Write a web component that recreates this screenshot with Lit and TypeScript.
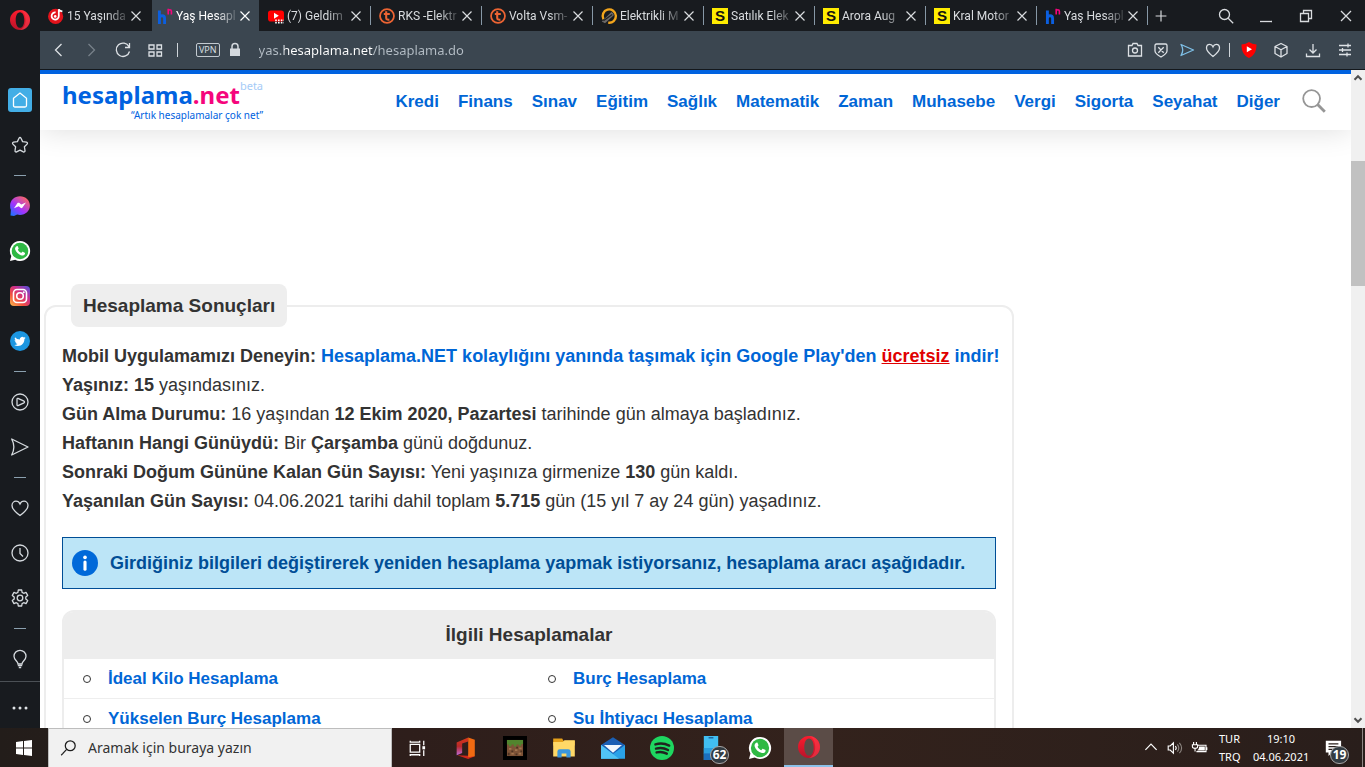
import { LitElement, html, svg, css, TemplateResult, SVGTemplateResult } from "lit";
import { customElement } from "lit/decorators.js";
import { classMap } from "lit/directives/class-map.js";

type Art = SVGTemplateResult;

const whatsapp = svg`<path fill="#fff" d="M10 0a10 10 0 0 0-8.700 15L0 20l5.200-1.300A10 10 0 1 0 10 0z"/><circle cx="10" cy="10" r="8.300" fill="#2fb944"/><path fill="#fff" d="M6.700 5.200c.4-.2.9-.2 1.100.2l.8 1.800c.1.300 0 .6-.2.800l-.6.800c.8 1.500 1.900 2.500 3.400 3.200l.9-1c.2-.3.500-.3.800-.2l1.800.9c.5.300.4.800.2 1.400-.5 1.200-1.900 1.700-3.100 1.400-3.500-.9-5.900-3.300-6.700-6.200-.3-1.300.5-2.600 1.600-3.100z"/>`;
const operaO = svg`<defs><linearGradient id="op" x1="0" y1="0" x2="0" y2="1"><stop offset="0" stop-color="#ff1b2d"/><stop offset="1" stop-color="#b8142a"/></linearGradient></defs><path fill="url(#op)" fill-rule="evenodd" d="M10 0c5.500 0 10 4.500 10 10s-4.500 10-10 10S0 15.500 0 10 4.500 0 10 0zm0 2.200C7.200 2.200 5.700 5.800 5.700 10s1.500 7.800 4.300 7.800 4.300-3.600 4.300-7.800S12.800 2.200 10 2.200z"/><path fill="#fa3c4c" opacity=".6" d="M10 0c6 0 10 5 10 10s-4 10-10 10c4-1.500 5.600-6 5.600-10S14 1.500 10 0z"/>`;

const art: Record<string, Art> = {
  opera: operaO,
  home: svg`<path class="ln" d="M3.500 8.300 10 3l6.500 5.300v7.200q0 1.500-1.500 1.500H5q-1.500 0-1.500-1.500z"/>`,
  star: svg`<path class="ln" stroke-linejoin="round" d="M10 2.500c.5 0 .8.300 1 .7l1.600 3.400 3.900.6c1 .2 1.300 1.200.6 1.900l-2.700 2.700.6 3.900c.1 1-.8 1.600-1.600 1.200L10 15.100l-3.400 1.800c-.9.400-1.800-.3-1.600-1.200l.6-3.900L2.900 9.100c-.7-.7-.4-1.700.6-1.900l3.900-.6L9 3.200c.2-.4.500-.7 1-.7z"/>`,
  messenger: svg`<defs><linearGradient id="ms" x1="0" y1="1" x2=".8" y2="0"><stop offset="0" stop-color="#0a7cff"/><stop offset=".45" stop-color="#a033ff"/><stop offset="1" stop-color="#ff6a5c"/></linearGradient></defs><path fill="url(#ms)" d="M10 .2c5.600 0 9.900 4 9.900 9.400S15.600 19 10 19c-1 0-2-.1-2.900-.4L4 20l-3.500-.5L.9 14A9.600 9.600 0 0 1 .1 9.600C.1 4.200 4.400.2 10 .2z"/><path fill="#fff" d="m4 12.200 3.500-5.100c.4-.5 1.100-.6 1.600-.3l2.200 1.700 4.700-2-3.500 5.100c-.4.600-1.100.7-1.600.4L8.700 10.300z"/>`,
  whatsapp,
  instagram: svg`<defs><linearGradient id="ig" x1="0" y1="1" x2=".9" y2="0"><stop offset="0" stop-color="#fdc04e"/><stop offset=".35" stop-color="#f2503f"/><stop offset=".65" stop-color="#cc2f8c"/><stop offset="1" stop-color="#5b4fd8"/></linearGradient></defs><rect width="20" height="20" rx="4" fill="url(#ig)"/><rect x="3.500" y="3.500" width="13" height="13" rx="3.500" fill="none" stroke="#fff" stroke-width="1.600"/><circle cx="10" cy="10" r="3.300" fill="none" stroke="#fff" stroke-width="1.600"/><circle cx="13.800" cy="6.200" r="1" fill="#fff"/>`,
  twitter: svg`<circle cx="10" cy="10" r="10" fill="#1c96e0"/><path fill="#fff" d="M15.600 6.800c-.4.200-.8.300-1.300.4.500-.3.800-.7 1-1.200-.5.200-1 .4-1.500.5a2.400 2.400 0 0 0-4 2.100A6.600 6.600 0 0 1 5 6.200a2.400 2.400 0 0 0 .7 3.100c-.4 0-.7-.1-1.100-.3 0 1.200.8 2.100 1.900 2.300-.4.100-.7.100-1.100 0 .3 1 1.200 1.600 2.200 1.600A4.700 4.700 0 0 1 4.200 14c1.100.6 2.300 1 3.600 1 4.300 0 6.800-3.600 6.600-7 .5-.3.900-.7 1.200-1.200z"/>`,
  player: svg`<circle class="ln" cx="10" cy="10" r="8"/><path class="ln" stroke-linejoin="round" d="M7 7.200q0-1.200 1-.8l6 2.800q1 .8 0 1.600l-6 2.800q-1 .4-1-.8z"/>`,
  send: svg`<path class="ln" stroke-linejoin="round" d="m1.700 2 16.300 8-16.300 8Q6 10 1.700 2z"/>`,
  heart: svg`<path class="ln" d="M10 17.500C4.500 13.500 2 10.700 2 7.500 2 5 4 3.200 6 3.200c1.800 0 3.200 1 4 2.800.8-1.800 2.200-2.800 4-2.800 2 0 4 1.800 4 4.300 0 3.200-2.500 6-8 10z"/>`,
  smallheart: svg`<path class="ln" d="M10 16.500C5.500 13 3.500 10.700 3.500 8c0-2.200 1.500-3.700 3.200-3.700 1.600 0 2.700 1 3.300 2.500.6-1.500 1.700-2.500 3.300-2.500 1.700 0 3.200 1.500 3.200 3.700 0 2.700-2 5-6.500 8.500z"/>`,
  clock: svg`<circle class="ln" cx="10" cy="10" r="8"/><path class="ln" d="M10 5v5.500l3 3"/>`,
  gear: svg`<path class="ln" stroke-linejoin="round" d="m8.300 2 3.400 0 .4 2.400 1.600.9 2.300-.9 1.700 3-1.900 1.500v2.200l1.900 1.500-1.700 3-2.300-.9-1.600.9-.4 2.400H8.300l-.4-2.400-1.600-.9-2.300.9-1.700-3 1.900-1.500V8.900L2.300 7.400l1.700-3 2.300.9 1.600-.9z"/><circle class="ln" cx="10" cy="10" r="2.800"/>`,
  bulb: svg`<path class="ln" d="M8 15c0-3-4-3.800-4-7.700a6 6 0 0 1 12 0C16 11.200 12 12 12 15z"/><path class="ln" d="M7.800 16.500h4.400M8.800 18.500h2.400"/>`,
  dots: svg`<g fill="#dfe3e6"><circle cx="4" cy="10" r="1.500"/><circle cx="10" cy="10" r="1.500"/><circle cx="16" cy="10" r="1.500"/></g>`,
  close: svg`<path class="ln" d="m5 5 10 10M15 5 5 15"/>`,
  plus: svg`<path class="ln" d="M10 4v12M4 10h12"/>`,
  search: svg`<circle class="ln" cx="8.500" cy="8.500" r="5"/><path class="ln" d="m12.200 12.200 5 5"/>`,
  minimize: svg`<path class="ln" d="M4 15.500h12"/>`,
  restore: svg`<path class="ln" d="M4.500 7.500h8v8h-8zM7.500 7.500v-3h8v8h-3"/>`,
  back: svg`<path class="ln" d="m12.500 4-6 6 6 6"/>`,
  forward: svg`<path class="ln" d="m7.500 4 6 6-6 6"/>`,
  reload: svg`<path class="ln" stroke-width="1.500" d="M16 6.700A6.700 6.700 0 1 0 16.500 11.500M16.500 3v4.500H12"/>`,
  grid: svg`<path class="ln" d="M4 5h5v4H4zM12 5h4.500v4H12zM4 12h5v4H4zM12 12h4.500v4H12z"/>`,
  lock: svg`<path fill="#d4d9de" d="M5 8.500h10V16H5z"/><path fill="none" stroke="#d4d9de" stroke-width="1.500" d="M7 9V6.500a3 3 0 0 1 6 0V9"/>`,
  camera: svg`<path class="ln" d="M3.500 5.500H7l1-2h4l1 2h3.500v10.500h-13z"/><circle class="ln" cx="10" cy="10.500" r="2.500"/>`,
  shield: svg`<path class="ln" d="M5.500 4h9q1.500 0 1.500 1.500V11c0 2.500-2.500 4-6 6-3.500-2-6-3.500-6-6V5.500Q4 4 5.500 4zM7.300 7.300l5.400 5.400M12.700 7.300l-5.400 5.400"/>`,
  flow: svg`<path fill="none" stroke="#7fc1e8" stroke-width="1.300" stroke-linejoin="round" d="m4 4.500 12.500 5.500L4 15.500Q7.500 10 4 4.500z"/>`,
  ytshield: svg`<path fill="#f00" d="M2.500 4.500Q7 4 10 2q3 2 7.500 2.500C17.500 11 15.500 15.500 10 18 4.500 15.500 2.500 11 2.500 4.500z"/><path fill="#fff" d="m7.800 6.200 5.200 3-5.200 3z"/>`,
  cube: svg`<path class="ln" stroke-linejoin="round" d="m10 3.500 6 3v7l-6 3.500-6-3.500v-7zM4 6.500l6 3.200 6-3.200M10 9.700V17"/>`,
  download: svg`<path class="ln" d="M10 4v8.500M6.500 9.500l3.500 3.500 3.500-3.500M3.500 13.500v3h13v-3"/>`,
  tune: svg`<path class="ln" d="M4 5.500h12M4 10h12M4 14.500h12M13 3.500v4M7.500 8v4M12 12.500v4"/>`,
  magnifier: svg`<circle cx="8" cy="8" r="7" fill="none" stroke="#969696" stroke-width="1.500"/><path stroke="#969696" stroke-width="2.400" d="m13 13 6 6"/>`,
  info: svg`<circle cx="10" cy="10" r="10" fill="#0069d9"/><circle cx="10" cy="5.700" r="1.400" fill="#fff"/><path stroke="#fff" stroke-width="2.400" stroke-linecap="round" d="M10 9.300v5.500"/>`,
  up: svg`<path fill="none" stroke="#505050" stroke-width="3" d="m5 12.500 5-5 5 5"/>`,
  down: svg`<path fill="none" stroke="#505050" stroke-width="3" d="m5 7.500 5 5 5-5"/>`,
  music: svg`<circle cx="9.500" cy="10.500" r="9.500" fill="#e3131b"/><path fill="none" stroke="#fff" stroke-width="2.200" d="M9.500 5.500a4.500 4.500 0 1 0 4 4.500V1.500c.6 1.800 2 2.500 4.500 2.800"/><circle cx="9" cy="10.500" r="1.600" fill="#fff"/>`,
  hn: svg`<path fill="none" stroke="#0b5fe0" stroke-width="3.600" d="M3 3v17M3 13c0-4.500 6.500-4.500 6.500 0v7"/><path fill="none" stroke="#f5057c" stroke-width="2" d="M14 1v7M14 4c0-2.500 4-2.500 4 0v4"/>`,
  youtube: svg`<rect y="3" width="20" height="14" rx="3.500" fill="#f00"/><path fill="#fff" d="m7.500 6 6 3.700-6 3.800z"/><path stroke="#fff" stroke-width="2" stroke-dasharray="2 1.500" d="M9 15.500h11M9 18.500h11"/>`,
  tlogo: svg`<circle cx="10" cy="10" r="8.700" fill="none" stroke="#ec6433" stroke-width="2.200"/><path fill="none" stroke="#ec6433" stroke-width="2.600" d="M9 4v8.500q0 2.500 4 2M6 7.500h7.500"/>`,
  swirl: svg`<path fill="none" stroke="#f3a51c" stroke-width="3" d="M3 14A8.300 8.300 0 1 1 9 18.300"/><path fill="#6d6a68" d="M1 17 13 5q3 1 3 4L5 19z"/><path stroke="#222" stroke-width="1.500" d="M3 16 14 8"/>`,
  sahibinden: svg`<rect width="20" height="20" fill="#ffec00"/><text class="glyph" x="10" y="16.500" text-anchor="middle">S</text>`,
  windows: svg`<path fill="#fff" d="m2 4 7-1v6.500H2zM10 2.900 18 2v7.500h-8zM2 10.500h7V17l-7-1zM10 10.500h8V18l-8-1z"/>`,
  wsearch: svg`<circle cx="12.500" cy="7.500" r="5.500" fill="none" stroke="#1d1d1d" stroke-width="1.400"/><path stroke="#1d1d1d" stroke-width="1.400" d="m8.500 11.500-6 6.500"/>`,
  taskview: svg`<path fill="none" stroke="#fff" stroke-width="1.400" d="M2.500 6h10.500v8.500H2.500zM2.500 2v1.500H13V2M2.500 19v-1.500H13V19M17.500 2v5M17.500 12.500V19"/><path fill="#fff" d="M16 8h3v3.500h-3z"/>`,
  office: svg`<defs><linearGradient id="of" x1="0" y1="1" x2="0" y2="0"><stop offset="0" stop-color="#c06ad8"/><stop offset=".5" stop-color="#b8292a"/><stop offset="1" stop-color="#d8381a"/></linearGradient></defs><path fill="url(#of)" d="M1.500 5 12 .5V4L6.500 6v8.500l-5 2z"/><path fill="#d0271b" d="m2 16.500 10 .5v-1.500l6 2-6 2.500z"/><path fill="#f06a12" d="m12 .5 6 2v15l-6 .8z"/>`,
  minecraft: svg`<rect width="20" height="20" fill="#000"/><path fill="#7d5337" d="M3.300 3.300h13.400v13.400H3.300z"/><path fill="#51852e" d="M3.300 3.300h13.400v3.400h-1.500v1.500h-2V7h-2v1.800H9V7H7v1.500H5V7H3.300z"/><path fill="#a2754f" d="M5 10h2v1.500H5zM10 11h2v1.500h-2zM13.500 9.500h2V11h-2zM7 14h2v1.500H7zM13 14h2v1.500h-2z"/><path fill="#4e3322" d="M7 12h1.500v1.500H7zM11 9h1.500v1.500H11zM4 14h1.500v2H4zM14.500 12H16v1.500h-1.500zM10.500 14.500H12V16h-1.500z"/>`,
  folder: svg`<path fill="#e5a01a" d="M1 2h7.500l1 2H19v4H1z"/><path fill="#ffd867" d="M1 5h8l1.500-1.500H19V17H1z"/><path fill="#3a96dd" d="M4.500 18v-5q0-2 2-2h7q2 0 2 2v5H12v-3.500H8V18z"/>`,
  mail: svg`<path fill="#1b5fb4" d="M0 7.500 10 1l10 6.500V18H0z"/><path fill="#f2f8fd" d="M2.500 7.500h15L10 14z"/><path fill="#2aa2e8" d="m0 7.500 10 7.500 10-7.500V19H0z"/><path fill="#51c4f5" d="M0 7.500 15 19H0z"/>`,
  spotify: svg`<circle cx="10" cy="10" r="10" fill="#1ed760"/><path fill="none" stroke="#20231f" stroke-width="2" stroke-linecap="round" d="M4.500 7c4-1.200 8-.8 11.500 1M5 10.500c3.500-1 7-.5 10 1.200M5.500 13.700c3-.8 5.800-.4 8.500 1"/>`,
  phone: svg`<path fill="#41bff3" d="M4 0h12v20H4z"/><path fill="#2a9ee0" d="M4 10h12v5H4z"/><path fill="#1b6fbe" d="M4 14.500h12V20H4z"/><path stroke="#16508c" stroke-width="1" d="M8 1.500h4"/>`,
  chevron: svg`<path fill="none" stroke="#fff" stroke-width="1.700" d="m2 14 8-8 8 8"/>`,
  speaker: svg`<path fill="none" stroke="#fff" stroke-width="1.400" d="M1.500 7.500H4l4-4v13l-4-4H1.500zM10.500 7.500q2 2.500 0 5"/><path fill="none" stroke="#8c8580" stroke-width="1.400" d="M13 5.500q3.500 4.500 0 9M15.500 3.500q5.500 6.500 0 13"/>`,
  battery: svg`<path fill="none" stroke="#fff" stroke-width="1.400" d="M7.500 6.500h10v8h-12M18.500 9v3.500M2 2.500v3M5.500 2.500v3M.5 6h6.500v2.500q0 2-3.200 2T.5 8.500zM3.800 10.500v4"/><path fill="#fff" d="M9 8h7v5H6.500q2.500-2 2.500-5z"/>`,
  notes: svg`<path fill="#fff" d="M2 2h17v13H9l-4 4v-4H2z"/><path stroke="#2b201c" stroke-width="1.300" d="M5 5.500h11M5 8.500h11M5 11.500h6"/>`,
};

const glyph = (name: string, size = 20): TemplateResult =>
  html`<svg aria-hidden="true" viewBox="0 0 20 20" width=${size} height=${size}>${art[name]}</svg>`;

const shared = css`
  * { box-sizing: border-box; }
  svg { display: block; flex: none; overflow: visible; }
  .ln { fill: none; stroke: currentColor; stroke-width: 1.300; }
  button { border: 0; padding: 0; margin: 0; background: none; color: inherit; font: inherit; display: grid; place-items: center; flex: none; }
  a { text-decoration: none; }
`;

@customElement("side-rail")
class SideRail extends LitElement {
  static styles = [shared, css`
    :host { display: flex; flex-direction: column; width: 40px; background: #181b1f; color: #d5dade; overflow: hidden; }
    .brand { height: 77px; flex: none; display: flex; justify-content: center; padding-top: 10px; }
    .item { height: 45px; width: 100%; }
    .tile { background: #43aee6; color: #fff; border-radius: 3px; width: 24px; height: 24px; display: grid; place-items: center; }
    hr { width: 12px; height: 16px; border: 0; margin: 0 auto; flex: none; background: linear-gradient(#8ba0ae, #8ba0ae) center / 12px 1px no-repeat; }
    .more { border-top: 1px solid #4b5055; flex: 1; width: 100%; padding-top: 6px; }
  `];

  render() {
    const groups = [
      [["home", "Ana Sayfa"], ["star", "Yer İmleri"]],
      [["messenger", "Messenger"], ["whatsapp", "WhatsApp"], ["instagram", "Instagram"], ["twitter", "Twitter"]],
      [["player", "Oynatıcı"], ["send", "Akışım"]],
      [["heart", "Favoriler"], ["clock", "Geçmiş"], ["gear", "Ayarlar"]],
      [["bulb", "İpuçları"]],
    ];
    return html`
      <div class="brand">${glyph("opera")}</div>
      ${groups.map((g, i) => html`${i ? html`<hr />` : ""}${g.map(([icon, label]) => html`
        <button class="item" aria-label=${label}>${icon === "home" ? html`<span class="tile">${glyph(icon)}</span>` : glyph(icon)}</button>`)}`)}
      <button class="more" aria-label="Diğer">${glyph("dots")}</button>`;
  }
}

@customElement("tab-strip")
class TabStrip extends LitElement {
  static styles = [shared, css`
    :host { display: flex; height: 31px; background: #181b1f; color: #d9dcdf; padding-right: 9px; }
    .tabs { display: flex; flex: 0 1 1108px; min-width: 0; }
    .tab { display: flex; align-items: center; flex: 1 1 0; min-width: 0; padding: 0 5px 0 8px; }
    .tab.line { border-right: 1px solid; border-image: linear-gradient(transparent 7px, #8798a6 7px, #8798a6 24px, transparent 24px) 1; }
    .tab.active { background: #3b4650; color: #fff; margin: 0 1px 0 2px; padding: 0 5px; }
    .title { flex: 1; margin-left: 3px; white-space: nowrap; font: 12px/18px Roboto, "Noto Sans", sans-serif; -webkit-mask-image: linear-gradient(90deg, #000 40px, transparent 64px); mask-image: linear-gradient(90deg, #000 40px, transparent 64px); }
    .glyph { font: bold 19px "Liberation Sans", sans-serif; fill: #111; }
    .new { width: 26px; }
    .window { margin-left: auto; display: flex; align-items: center; gap: 20px; }
  `];

  render() {
    const tabs = [
      ["music", "15 Yaşında"], ["hn", "Yaş Hesapl"], ["youtube", "(7) Geldim"], ["tlogo", "RKS -Elektr"],
      ["tlogo", "Volta Vsm-"], ["swirl", "Elektrikli M"], ["sahibinden", "Satılık Elek"],
      ["sahibinden", "Arora Aug"], ["sahibinden", "Kral Motor"], ["hn", "Yaş Hesapl"],
    ];
    return html`
      <div class="tabs">${tabs.map(([icon, title], i) => html`
        <div class=${classMap({ tab: true, active: i === 1, line: i > 1 })}>
          ${glyph(icon, 16)}<span class="title">${title}</span>
          <button aria-label="Sekmeyi kapat">${glyph("close", 18)}</button>
        </div>`)}</div>
      <button class="new" aria-label="Yeni sekme">${glyph("plus", 18)}</button>
      <div class="window">
        <button aria-label="Ara">${glyph("search")}</button>
        <button aria-label="Küçült">${glyph("minimize")}</button>
        <button aria-label="Geri yükle">${glyph("restore")}</button>
        <button aria-label="Kapat">${glyph("close")}</button>
      </div>`;
  }
}

@customElement("address-bar")
class AddressBar extends LitElement {
  static styles = [shared, css`
    :host { display: flex; align-items: center; height: 39px; background: #3b4650; color: #dde1e5; border-bottom: 1px solid #14181c; padding: 0 10px 0 9px; }
    .nav { display: flex; align-items: center; gap: 12px; }
    .dim { color: #77818a; }
    .bar { width: 1px; height: 14px; background: #cfd5da; margin: 0 18px 0 12px; }
    .vpn { font: 9px/12px "Open Sans", sans-serif; border: 1px solid #c3cad0; border-radius: 2px; padding: 0 2px; margin-right: 5px; }
    .url { flex: 1; min-width: 0; border: 0; outline: 0; margin: 0 12px 0 14px; padding: 0; height: 24px; font: 13px/24px "Noto Sans", sans-serif; color: transparent;
      background: linear-gradient(90deg, #b4bdc5 25px, #fff 25px, #fff 114px, #b4bdc5 114px); -webkit-background-clip: text; background-clip: text; }
    .tools { display: flex; align-items: center; gap: 6px; }
    .tools .bar { margin: 0 3px 0 0; }
    .wide { display: flex; gap: 12px; }
  `];

  render() {
    const btn = (icon: string, label: string, cls = "") => html`<button class=${cls} aria-label=${label}>${glyph(icon)}</button>`;
    return html`
      <div class="nav">${btn("back", "Geri")}${btn("forward", "İleri", "dim")}${btn("reload", "Yenile")}${btn("grid", "Hızlı erişim")}</div>
      <span class="bar"></span>
      <button class="vpn">VPN</button>
      ${btn("lock", "Bağlantı güvenli")}
      <input class="url" aria-label="Adres" .value=${"yas.hesaplama.net/hesaplama.do"} />
      <div class="tools">
        ${btn("camera", "Anlık görüntü")}${btn("shield", "Reklam engelleyici")}${btn("flow", "Akışıma gönder")}${btn("smallheart", "Yer imlerine ekle")}
        <span class="bar"></span>
        <div class="wide">${btn("ytshield", "YouTube eklentisi")}${btn("cube", "Uzantılar")}${btn("download", "İndirilenler")}${btn("tune", "Kolay kurulum")}</div>
      </div>`;
  }
}

@customElement("site-page")
class SitePage extends LitElement {
  static styles = [shared, css`
    :host { display: block; background: #fff; color: #333; font: 18px/29px "Liberation Sans", Arial, sans-serif; overflow: hidden; min-width: 0; }
    header { display: flex; align-items: center; height: 60px; border-top: 4px solid #0062e0; padding: 0 25px 2px 22px; box-shadow: 0 0 30px rgba(0, 0, 0, 0.14); }
    .logo { display: grid; grid-template-columns: auto auto; color: #0062e0; font-family: "Noto Sans", "Open Sans", sans-serif; }
    .word { font-size: 24px; line-height: 28px; font-weight: bold; }
    .word em { font-style: normal; color: #f5057c; }
    .beta { font-size: 11px; line-height: 10px; color: #a5cbf7; }
    .tag { grid-column: 1 / 3; justify-self: end; font-size: 10px; line-height: 12px; }
    nav { margin-left: auto; display: flex; gap: 19px; font-weight: bold; font-size: 17px; }
    nav a, .links a { color: #0066d6; }
    .find { margin-left: 22px; }
    main { max-width: 974px; padding: 154px 0 0 4px; }
    fieldset { margin: 0; min-width: 0; border: 2px solid #ededed; border-radius: 12px; padding: 15px 16px 40px; }
    legend { margin-left: 9px; padding: 7px 12px; border-radius: 8px; background: #eee; font-size: 19px; font-weight: bold; }
    p { margin: 0; white-space: nowrap; }
    .promo { color: #0066d6; font-weight: bold; }
    .promo u { color: #e00000; }
    .notice { display: flex; align-items: center; gap: 12px; margin: 21px 0; height: 52px; padding-left: 9px; border: 1px solid #004e96; background: #bce5f7; color: #004e96; font-weight: bold; white-space: nowrap; }
    .related { border: 2px solid #ededed; border-radius: 12px 12px 0 0; }
    h2 { margin: 0; height: 47px; line-height: 46px; text-align: center; background: #ededed; font-size: 19px; border-radius: 9px 9px 0 0; }
    .links { list-style: none; margin: 0; padding: 0; display: grid; grid-template-columns: 1fr 1fr; font-size: 17px; font-weight: bold; }
    .links li { display: flex; align-items: center; height: 40px; padding-left: 19px; gap: 17px; border-bottom: 1px solid #eee; }
    .links li::before { content: ""; width: 6px; height: 6px; border: 1px solid #333; border-radius: 50%; }
  `];

  render() {
    const menu = ["Kredi", "Finans", "Sınav", "Eğitim", "Sağlık", "Matematik", "Zaman", "Muhasebe", "Vergi", "Sigorta", "Seyahat", "Diğer"];
    const related = ["İdeal Kilo Hesaplama", "Burç Hesaplama", "Yükselen Burç Hesaplama", "Su İhtiyacı Hesaplama"];
    return html`
      <header>
        <a class="logo" href="#"><span class="word">hesaplama<em>.net</em></span><span class="beta">beta</span><span class="tag">“Artık hesaplamalar çok net”</span></a>
        <nav>${menu.map((m) => html`<a href="#">${m}</a>`)}</nav>
        <button class="find" aria-label="Ara">${glyph("magnifier", 24)}</button>
      </header>
      <main>
        <fieldset>
          <legend>Hesaplama Sonuçları</legend>
          <p><b>Mobil Uygulamamızı Deneyin:</b> <a class="promo" href="#">Hesaplama.NET kolaylığını yanında taşımak için Google Play'den <u>ücretsiz</u> indir!</a></p>
          <p><b>Yaşınız: 15</b> yaşındasınız.</p>
          <p><b>Gün Alma Durumu:</b> 16 yaşından <b>12 Ekim 2020, Pazartesi</b> tarihinde gün almaya başladınız.</p>
          <p><b>Haftanın Hangi Günüydü:</b> Bir <b>Çarşamba</b> günü doğdunuz.</p>
          <p><b>Sonraki Doğum Gününe Kalan Gün Sayısı:</b> Yeni yaşınıza girmenize <b>130</b> gün kaldı.</p>
          <p><b>Yaşanılan Gün Sayısı:</b> 04.06.2021 tarihi dahil toplam <b>5.715</b> gün (15 yıl 7 ay 24 gün) yaşadınız.</p>
          <div class="notice">${glyph("info", 26)}<span>Girdiğiniz bilgileri değiştirerek yeniden hesaplama yapmak istiyorsanız, hesaplama aracı aşağıdadır.</span></div>
          <section class="related">
            <h2>İlgili Hesaplamalar</h2>
            <ul class="links">${related.map((r) => html`<li><a href="#">${r}</a></li>`)}</ul>
          </section>
        </fieldset>
      </main>`;
  }
}

@customElement("task-bar")
class TaskBar extends LitElement {
  static styles = [shared, css`
    :host { display: flex; height: 39px; background: linear-gradient(90deg, #231d1a, #2e1e1b 30%, #33221c 60%, #291e1b); color: #fff; font: 11px/18px "Noto Sans", sans-serif; overflow: hidden; }
    .start { width: 48px; }
    .search { display: flex; align-items: center; gap: 11px; flex: 0 1 344px; min-width: 0; background: #f1f1f1; border: 1px solid #bdbdbd; border-bottom: 0; padding-left: 10px; }
    .search input { border: 0; outline: 0; background: none; flex: 1; min-width: 0; padding: 0; font: 14px/20px "Noto Sans", sans-serif; }
    .search input::placeholder { color: #333; opacity: 1; }
    .app { width: 49px; position: relative; }
    .app.on { background: #5b4c47; border-bottom: 2px solid #8cc2ea; }
    .badge { position: absolute; left: 24px; top: 18px; min-width: 19px; height: 18px; border: 1px solid #a5a5a5; border-radius: 9px; background: #333c42; font: bold 12px/16px "Open Sans", sans-serif; text-align: center; }
    .tray { margin-left: auto; display: flex; align-items: center; }
    .icons { display: flex; gap: 9px; margin-right: 11px; }
    .lang { width: 34px; }
    .clock { width: 56px; margin-right: 7px; text-align: center; white-space: nowrap; }
    .notes { position: relative; width: 34px; height: 39px; margin-right: 12px; }
    .notes .badge { left: 14px; }
    .peek { width: 3px; align-self: stretch; border-left: 1px solid #8d8683; }
  `];

  render() {
    const apps: [string, number, string][] = [
      ["taskview", 18, "Görev görünümü"], ["office", 22, "Office"], ["minecraft", 24, "Minecraft"], ["folder", 24, "Dosya Gezgini"],
      ["mail", 24, "Posta"], ["spotify", 24, "Spotify"], ["phone", 24, "Telefonunuz"], ["whatsapp", 22, "WhatsApp"], ["opera", 22, "Opera"],
    ];
    return html`
      <button class="start" aria-label="Başlat">${glyph("windows")}</button>
      <label class="search">${glyph("wsearch", 18)}<input aria-label="Arama" placeholder="Aramak için buraya yazın" /></label>
      ${apps.map(([icon, size, label]) => html`
        <button class=${classMap({ app: true, on: icon === "opera" })} aria-label=${label}>${glyph(icon, size)}${icon === "phone" ? html`<span class="badge">62</span>` : ""}</button>`)}
      <div class="tray">
        <div class="icons">${glyph("chevron", 14)}${glyph("speaker", 16)}${glyph("battery", 16)}</div>
        <div class="lang">TUR<br />TRQ</div>
        <div class="clock">19:10<br />04.06.2021</div>
        <button class="notes" aria-label="Bildirimler">${glyph("notes", 18)}<span class="badge">19</span></button>
        <span class="peek"></span>
      </div>`;
  }
}

@customElement("app-root")
class AppRoot extends LitElement {
  static styles = [shared, css`
    :host { display: grid; grid-template: minmax(0, 1fr) auto / auto minmax(0, 1fr); height: 100vh; overflow: hidden; }
    .window { display: flex; flex-direction: column; min-width: 0; min-height: 0; }
    .view { display: flex; flex: 1; min-height: 0; }
    site-page { flex: 1; }
    .scroll { width: 14px; background: #f0f0f0; display: grid; grid-template-rows: 16px 75fr 125fr 427fr 16px; justify-items: center; align-items: center; }
    .thumb { grid-row: 3; background: #c1c1c1; width: 100%; height: 100%; }
    .end { grid-row: 5; }
    task-bar { grid-column: 1 / 3; }
  `];

  render() {
    return html`
      <side-rail></side-rail>
      <div class="window">
        <tab-strip></tab-strip>
        <address-bar></address-bar>
        <div class="view">
          <site-page></site-page>
          <div class="scroll">${glyph("up", 14)}<span class="thumb"></span><span class="end">${glyph("down", 14)}</span></div>
        </div>
      </div>
      <task-bar></task-bar>`;
  }
}
